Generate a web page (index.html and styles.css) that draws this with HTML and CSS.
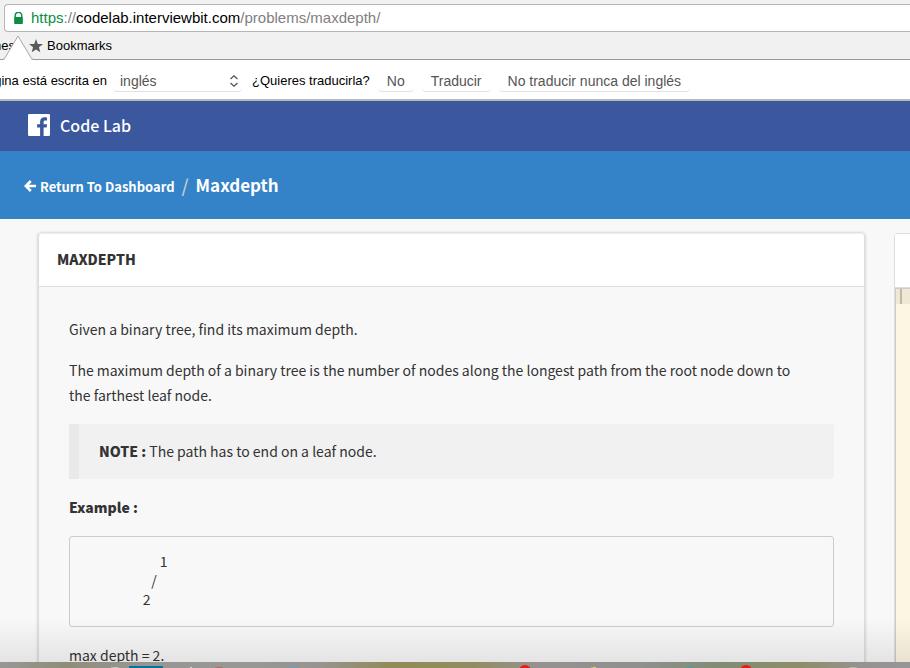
FILE: index.html
```html
<!DOCTYPE html>
<html lang="es">
<head>
<meta charset="utf-8">
<meta name="viewport" content="width=device-width, initial-scale=1">
<title>Maxdepth</title>
<link rel="stylesheet" href="styles.css">
</head>
<body>
<div class="browser">
  <div class="address" aria-label="Address">
    <svg class="lock" viewBox="0 0 8 11" aria-hidden="true"><path d="M1 5V3.300a3 3 0 0 1 6 0V5" fill="none" stroke="#0b8e43" stroke-width="1.300"/><rect y="4.500" width="8" height="6.500" rx=".6" fill="#0b8e43"/></svg>
    <span class="url"><span class="secure">https</span>://<span class="host">codelab.interviewbit.com</span>/problems/maxdepth/</span>
  </div>
  <nav class="bookmarks">
    <a class="bookmark cut" href="#">nes</a>
    <a class="bookmark" href="#"><svg class="star" viewBox="0 0 14 14" aria-hidden="true"><path d="M7 0l1.800 4.900 5.200.2-4.100 3.200L11.300 13.300 7 10.400 2.700 13.300 4.100 8.300 0 5.100l5.200-.2z" fill="#5a5a5a"/></svg>Bookmarks</a>
  </nav>
  <svg class="pointer" viewBox="0 0 30 26" aria-hidden="true"><path d="M0 24.500h1.500L15 1l13.500 23.500H30V26H0z" fill="#fff"/><path d="M0 24L1.500 23.500 15 1l13.500 22.500L30 24" fill="none" stroke="#a9a9a9"/></svg>
</div>
<form class="translate">
  <label class="question lead" for="language">Esta página está escrita en</label>
  <span class="picker">
    <select class="language" id="language"><option>inglés</option></select>
    <svg class="chevrons" viewBox="0 0 8 12" aria-hidden="true"><path d="M.5 4L4 .8 7.500 4M.5 8L4 11.200 7.500 8" fill="none" stroke="#555" stroke-width="1.300"/></svg>
  </span>
  <span class="question">¿Quieres traducirla?</span>
  <button class="choice" type="button">No</button>
  <button class="choice" type="button">Traducir</button>
  <button class="choice" type="button">No traducir nunca del inglés</button>
</form>
<header class="brand">
  <svg class="logo" viewBox="0 0 22 22" aria-hidden="true"><path fill="#fff" d="M1.200 0h19.600Q22 0 22 1.200v19.600q0 1.200-1.200 1.200H15.600V13.600h3l.5-3.400h-3.500V8.100c0-1 .4-1.600 1.700-1.600H19V3.500c-.5-.1-1.400-.2-2.400-.2-2.800 0-4.500 1.600-4.500 4.400v2.500H9.100v3.400h3V22H1.200Q0 22 0 20.800V1.200Q0 0 1.200 0z"/></svg>
  <span>Code Lab</span>
</header>
<nav class="crumbs">
  <a class="return" href="#"><svg class="arrow" viewBox="0 0 12 12" aria-hidden="true"><path d="M6.800 1L1.800 6l5 5M2.200 6H12" fill="none" stroke="#fff" stroke-width="2.600"/></svg>Return To Dashboard</a>
  <span class="slash">/</span>
  <span class="current">Maxdepth</span>
</nav>
<main class="workspace">
  <article class="card">
    <h1 class="title">MAXDEPTH</h1>
    <div class="content">
      <p>Given a binary tree, find its maximum depth.</p>
      <p>The maximum depth of a binary tree is the number of nodes along the longest path from the root node down to<br>the farthest leaf node.</p>
      <blockquote><strong>NOTE :</strong> The path has to end on a leaf node.</blockquote>
      <p><strong>Example :</strong></p>
      <pre>         <span>1</span>
        <span>/</span>
       <span>2</span></pre>
      <p>max depth = 2.</p>
    </div>
  </article>
  <aside class="editor" aria-label="Editor">
    <div class="editor-head"></div>
    <div class="code"><div class="active-line"></div></div>
  </aside>
</main>
<div class="shade"></div>
<footer class="dock">
  <svg class="dock-icons" viewBox="0 0 910 6" preserveAspectRatio="none" aria-hidden="true"><ellipse cx="115" cy="6" rx="4" ry="1" fill="#c4ccca"/><rect x="129" y="4" width="34" height="5" rx="1" fill="#087399"/><path d="M190 6v-1h2v1z" fill="#d8d8d8"/><ellipse cx="219" cy="6" rx="4" ry="1" fill="#c2655c"/><ellipse cx="293" cy="6" rx="6" ry="1" fill="#54a9c5"/><circle cx="525" cy="9" r="6" fill="#ed1717"/><path d="M590 6l4-1h2v1z" fill="#e7d454"/><ellipse cx="690" cy="6" rx="4" ry="1" fill="#3e9fb6"/><circle cx="746" cy="9" r="6" fill="#ed1717"/><ellipse cx="853" cy="6" rx="4" ry="1" fill="#bbb9a8"/></svg>
</footer>
</body>
</html>
```
FILE: styles.css
```css
* { box-sizing: border-box; }
body {
  margin: 0;
  height: 100vh;
  overflow: hidden;
  background: #f8f8f8;
  color: #333;
  font: 14px/25px "Noto Sans CJK JP", sans-serif;
}
a { color: inherit; text-decoration: none; }

.browser {
  position: relative;
  padding-top: 4px;
  background: #f1f1f1;
  border-bottom: 1px solid #999;
  color: #000;
  font: 13px/28px "Liberation Sans", sans-serif;
}
.address {
  display: flex;
  align-items: center;
  gap: 8px;
  height: 28px;
  margin-left: 4px;
  padding-left: 9px;
  background: #fff;
  border: 1px solid #b5b5b5;
  border-right: 0;
  border-radius: 4px 0 0 4px;
  font-size: 15px;
}
.lock { width: 9px; height: 12px; }
.url { color: #808080; }
.secure { color: #0b8e43; }
.host { color: #000; }
.bookmarks { display: flex; gap: 14px; height: 27px; overflow: hidden; }
.bookmark { display: flex; align-items: center; gap: 4px; }
.cut { width: 15px; justify-content: flex-end; }
.star { width: 14px; height: 14px; }
.pointer {
  position: absolute;
  left: 3px;
  bottom: -2px;
  width: 30px;
  height: 26px;
}

.translate {
  display: flex;
  align-items: center;
  height: 41px;
  padding-top: 2px;
  overflow: hidden;
  background: #fff;
  border-bottom: 2px solid #b8bab8;
  font: 13px/22px "Liberation Sans", sans-serif;
}
.question { flex: none; margin-right: 8px; color: #000; }
.lead { width: 107px; margin-right: 6px; display: flex; justify-content: flex-end; white-space: nowrap; }
.picker { position: relative; flex: none; width: 129px; margin-right: 10px; }
.language, .choice {
  height: 22px;
  background: #fff;
  border: 0;
  border-bottom: 1px solid #e2e2e2;
  border-radius: 4px;
  color: #555;
  font: inherit;
  font-size: 14px;
}
.language { display: block; width: 100%; padding: 0 7px; appearance: none; }
.chevrons { position: absolute; right: 4px; top: 5px; width: 8px; height: 12px; }
.choice { flex: none; margin-right: 8px; padding: 0 9px; }

.brand {
  display: flex;
  align-items: center;
  gap: 10px;
  height: 50px;
  padding: 0 28px 2px;
  background: #3b579d;
  color: #fff;
  font-size: 16px;
  font-weight: 500;
}
.logo { width: 22px; height: 22px; }
.crumbs {
  display: flex;
  align-items: center;
  height: 68px;
  padding: 0 24px;
  background: #3483c8;
  color: #fff;
  font-weight: 700;
}
.return { display: flex; align-items: center; gap: 4px; padding-top: 2px; font-size: 13px; }
.arrow { width: 12px; height: 12px; }
.slash { margin: 0 7px; color: #ccc; font-size: 18px; font-weight: 500; }
.current { padding-bottom: 2px; font-size: 17px; }

.workspace { display: flex; gap: 29px; padding: 14px 0 0 38px; }
.card {
  flex: 1;
  min-width: 0;
  border: 1px solid #ddd;
  border-top-color: #eee;
  border-radius: 4px;
  box-shadow: 0 0 3px rgba(0, 0, 0, .25);
}
.title {
  margin: 0;
  padding: 13px 18px 15px;
  background: #fff;
  border-bottom: 1px solid #ddd;
  border-radius: 4px 4px 0 0;
  font-size: 14px;
  font-weight: 900;
  line-height: 24px;
}
.content { padding: 30px; }
p { margin: 0 0 16px; }
strong { font-weight: 900; }
blockquote {
  margin: 0 0 16px;
  padding: 15px 20px;
  background: #f1f1f1;
  border-left: 10px solid #e9e9e9;
  border-radius: 0 3px 3px 0;
}
pre {
  margin: 0 0 16px;
  padding: 17px 14px 15px;
  border: 1px solid #ccc;
  border-radius: 3px;
  font: 14px/19px "Liberation Mono", monospace;
}
pre span { font-family: "Noto Sans CJK JP", sans-serif; font-size: 14px; line-height: 0; }
.editor {
  flex: 0 0 16px;
  border: 1px solid #ddd;
  border-right: 0;
  border-radius: 4px 0 0 0;
}
.editor-head { height: 54px; background: #fff; border-bottom: 1px solid #ddd; }
.code { height: calc(100% - 54px); background: #fdf6e3; border-left: 1px solid #ccc; }
.active-line {
  height: 16px;
  background: linear-gradient(90deg, #eee8d5 4px, #bfb8a8 4px 6px, #eee8d5 6px);
  border-top: 1px solid #ccc;
}

.shade {
  position: fixed;
  inset: auto 0 6px;
  height: 44px;
  background: linear-gradient(transparent, rgba(0, 0, 0, .08));
  pointer-events: none;
}
.dock {
  position: fixed;
  inset: auto 0 0;
  height: 6px;
  background: linear-gradient(90deg, #989796, #8f8d78 7%, #979696 16%, #979793 28%, #989390 35%, #908b58 43%, #918d60 52%, #969190 59%, #8f918e 70%, #808c73 79%, #8f8d68 88%, #969292 95%, #979696);
}
.dock-icons { display: block; width: 100%; height: 6px; }
```
